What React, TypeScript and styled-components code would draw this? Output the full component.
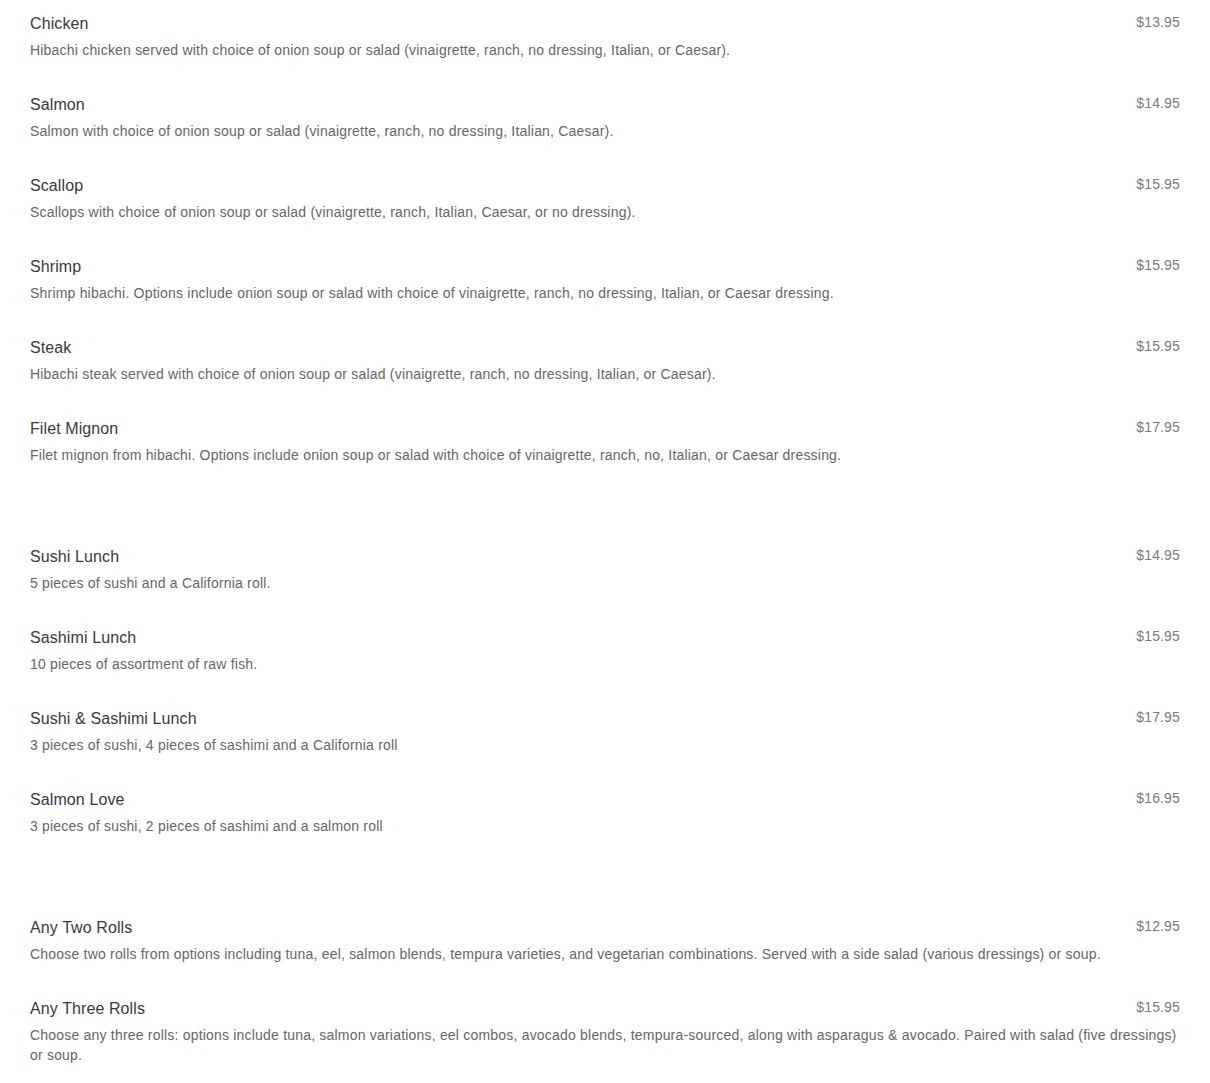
import React from "react";
import styled, { createGlobalStyle } from "styled-components";

const Global = createGlobalStyle`
  html, body { margin: 0; padding: 0; background: #fff; }
  body { font-family: "Liberation Sans", Arial, sans-serif; }
`;

const Page = styled.div`
  padding: 14px 30px 0 30px;
`;

const Section = styled.section`
  display: flex;
  flex-direction: column;
  & + & { margin-top: 47px; }
`;

const Item = styled.div`
  display: flex;
  flex-direction: column;
  padding-bottom: 35px;
`;

const Head = styled.div`
  display: flex;
  justify-content: space-between;
  align-items: flex-start;
`;

const Title = styled.div`
  font-size: 16px;
  line-height: 18px;
  padding-top: 1px;
  color: #3a3a3a;
  letter-spacing: 0.1px;
`;

const Price = styled.div`
  font-size: 14px;
  line-height: 14px;
  color: #7a7a7a;
  padding-top: 1px;
  letter-spacing: 0.15px;
`;

const Desc = styled.div`
  margin-top: 7px;
  font-size: 14px;
  line-height: 20px;
  color: #666;
  letter-spacing: 0.2px;
`;

type MenuItem = { name: string; price: string; desc: string };

const sections: MenuItem[][] = [
  [
    { name: "Chicken", price: "$13.95", desc: "Hibachi chicken served with choice of onion soup or salad (vinaigrette, ranch, no dressing, Italian, or Caesar)." },
    { name: "Salmon", price: "$14.95", desc: "Salmon with choice of onion soup or salad (vinaigrette, ranch, no dressing, Italian, Caesar)." },
    { name: "Scallop", price: "$15.95", desc: "Scallops with choice of onion soup or salad (vinaigrette, ranch, Italian, Caesar, or no dressing)." },
    { name: "Shrimp", price: "$15.95", desc: "Shrimp hibachi. Options include onion soup or salad with choice of vinaigrette, ranch, no dressing, Italian, or Caesar dressing." },
    { name: "Steak", price: "$15.95", desc: "Hibachi steak served with choice of onion soup or salad (vinaigrette, ranch, no dressing, Italian, or Caesar)." },
    { name: "Filet Mignon", price: "$17.95", desc: "Filet mignon from hibachi. Options include onion soup or salad with choice of vinaigrette, ranch, no, Italian, or Caesar dressing." },
  ],
  [
    { name: "Sushi Lunch", price: "$14.95", desc: "5 pieces of sushi and a California roll." },
    { name: "Sashimi Lunch", price: "$15.95", desc: "10 pieces of assortment of raw fish." },
    { name: "Sushi & Sashimi Lunch", price: "$17.95", desc: "3 pieces of sushi, 4 pieces of sashimi and a California roll" },
    { name: "Salmon Love", price: "$16.95", desc: "3 pieces of sushi, 2 pieces of sashimi and a salmon roll" },
  ],
  [
    { name: "Any Two Rolls", price: "$12.95", desc: "Choose two rolls from options including tuna, eel, salmon blends, tempura varieties, and vegetarian combinations. Served with a side salad (various dressings) or soup." },
    { name: "Any Three Rolls", price: "$15.95", desc: "Choose any three rolls: options include tuna, salmon variations, eel combos, avocado blends, tempura-sourced, along with asparagus & avocado. Paired with salad (five dressings) or soup." },
  ],
];

export default function App() {
  return (
    <>
      <Global />
      <Page>
        {sections.map((items, si) => (
          <Section key={si}>
            {items.map((it) => (
              <Item key={it.name}>
                <Head>
                  <Title>{it.name}</Title>
                  <Price>{it.price}</Price>
                </Head>
                <Desc>{it.desc}</Desc>
              </Item>
            ))}
          </Section>
        ))}
      </Page>
    </>
  );
}
